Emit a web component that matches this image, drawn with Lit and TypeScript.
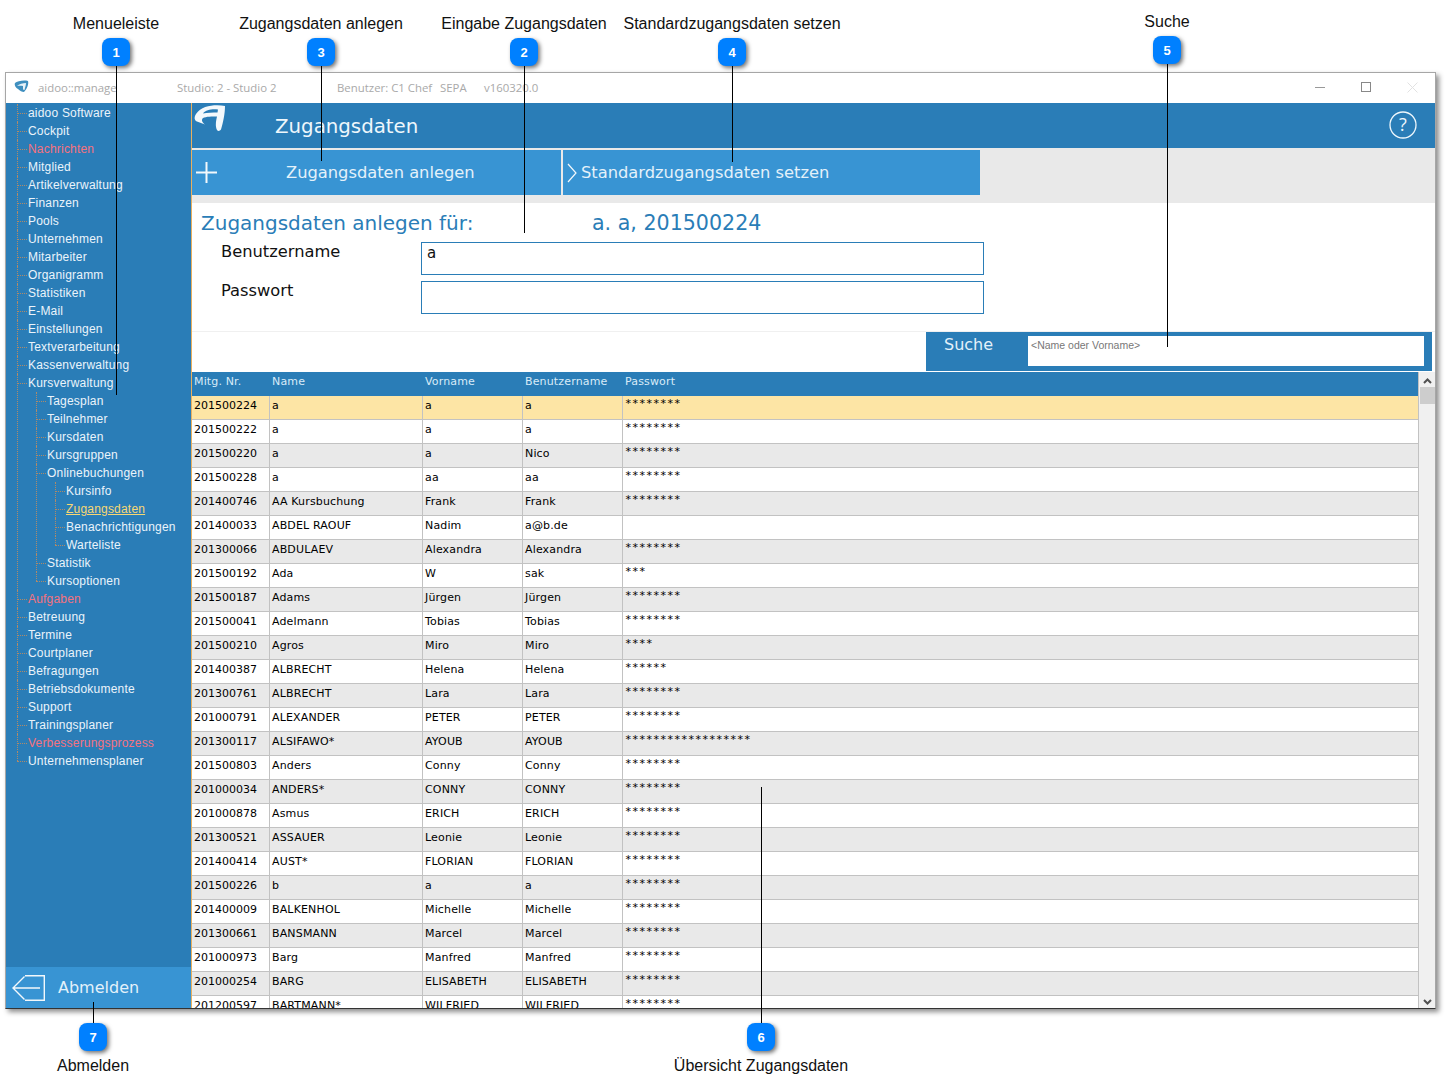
import {css, html, LitElement} from 'lit';
import {customElement} from 'lit/decorators.js';

type TreeItem = {label: string; tone?: 'red' | 'active'; children?: TreeItem[]};

const MENU: TreeItem[] = [
  {label: 'aidoo Software'},
  {label: 'Cockpit'},
  {label: 'Nachrichten', tone: 'red'},
  {label: 'Mitglied'},
  {label: 'Artikelverwaltung'},
  {label: 'Finanzen'},
  {label: 'Pools'},
  {label: 'Unternehmen'},
  {label: 'Mitarbeiter'},
  {label: 'Organigramm'},
  {label: 'Statistiken'},
  {label: 'E-Mail'},
  {label: 'Einstellungen'},
  {label: 'Textverarbeitung'},
  {label: 'Kassenverwaltung'},
  {
    label: 'Kursverwaltung',
    children: [
      {label: 'Tagesplan'},
      {label: 'Teilnehmer'},
      {label: 'Kursdaten'},
      {label: 'Kursgruppen'},
      {
        label: 'Onlinebuchungen',
        children: [
          {label: 'Kursinfo'},
          {label: 'Zugangsdaten', tone: 'active'},
          {label: 'Benachrichtigungen'},
          {label: 'Warteliste'}
        ]
      },
      {label: 'Statistik'},
      {label: 'Kursoptionen'}
    ]
  },
  {label: 'Aufgaben', tone: 'red'},
  {label: 'Betreuung'},
  {label: 'Termine'},
  {label: 'Courtplaner'},
  {label: 'Befragungen'},
  {label: 'Betriebsdokumente'},
  {label: 'Support'},
  {label: 'Trainingsplaner'},
  {label: 'Verbesserungsprozess', tone: 'red'},
  {label: 'Unternehmensplaner'}
];

const S8 = '********';
const ROWS: string[][] = [
  ['201500224', 'a', 'a', 'a', S8],
  ['201500222', 'a', 'a', 'a', S8],
  ['201500220', 'a', 'a', 'Nico', S8],
  ['201500228', 'a', 'aa', 'aa', S8],
  ['201400746', 'AA Kursbuchung', 'Frank', 'Frank', S8],
  ['201400033', 'ABDEL RAOUF', 'Nadim', 'a@b.de', ''],
  ['201300066', 'ABDULAEV', 'Alexandra', 'Alexandra', S8],
  ['201500192', 'Ada', 'W', 'sak', '***'],
  ['201500187', 'Adams', 'Jürgen', 'Jürgen', S8],
  ['201500041', 'Adelmann', 'Tobias', 'Tobias', S8],
  ['201500210', 'Agros', 'Miro', 'Miro', '****'],
  ['201400387', 'ALBRECHT', 'Helena', 'Helena', '******'],
  ['201300761', 'ALBRECHT', 'Lara', 'Lara', S8],
  ['201000791', 'ALEXANDER', 'PETER', 'PETER', S8],
  ['201300117', 'ALSIFAWO*', 'AYOUB', 'AYOUB', '******************'],
  ['201500803', 'Anders', 'Conny', 'Conny', S8],
  ['201000034', 'ANDERS*', 'CONNY', 'CONNY', S8],
  ['201000878', 'Asmus', 'ERICH', 'ERICH', S8],
  ['201300521', 'ASSAUER', 'Leonie', 'Leonie', S8],
  ['201400414', 'AUST*', 'FLORIAN', 'FLORIAN', S8],
  ['201500226', 'b', 'a', 'a', S8],
  ['201400009', 'BALKENHOL', 'Michelle', 'Michelle', S8],
  ['201300661', 'BANSMANN', 'Marcel', 'Marcel', S8],
  ['201000973', 'Barg', 'Manfred', 'Manfred', S8],
  ['201000254', 'BARG', 'ELISABETH', 'ELISABETH', S8],
  ['201200597', 'BARTMANN*', 'WILFRIED', 'WILFRIED', S8]
];

// x = centre of badge and line, badgeY = top of badge, lineTo = other end of the line
const CALLOUTS = [
  {n: 1, label: 'Menueleiste', x: 116, labelY: 15, badgeY: 38, lineFrom: 66, lineTo: 395},
  {n: 2, label: 'Eingabe Zugangsdaten', x: 524, labelY: 15, badgeY: 38, lineFrom: 66, lineTo: 233},
  {n: 3, label: 'Zugangsdaten anlegen', x: 321, labelY: 15, badgeY: 38, lineFrom: 66, lineTo: 161},
  {n: 4, label: 'Standardzugangsdaten setzen', x: 732, labelY: 15, badgeY: 38, lineFrom: 66, lineTo: 162},
  {n: 5, label: 'Suche', x: 1167, labelY: 13, badgeY: 36, lineFrom: 64, lineTo: 347},
  {n: 6, label: 'Übersicht Zugangsdaten', x: 761, labelY: 1057, badgeY: 1023, lineFrom: 787, lineTo: 1023},
  {n: 7, label: 'Abmelden', x: 93, labelY: 1057, badgeY: 1023, lineFrom: 1002, lineTo: 1023}
];

@customElement('app-root')
export class AppRoot extends LitElement {
  static styles = css`
    :host {
      display: block;
      position: relative;
      box-sizing: border-box;
      width: 1445px;
      height: 1091px;
      padding: 72px 9px 82px 5px;
      background: #fff;
      font-family: "DejaVu Sans", sans-serif;
      overflow: hidden;
    }

    .window {
      display: flex;
      flex-direction: column;
      box-sizing: border-box;
      height: 937px;
      background: #fff;
      border: 1px solid #a6a6a6;
      border-bottom: 1px solid #333;
      box-shadow: 3px 3px 5px rgba(0, 0, 0, 0.45);
    }

    .titlebar {
      display: flex;
      align-items: center;
      flex: none;
      box-sizing: border-box;
      height: 30px;
      padding-bottom: 1px;
      font: 11.4px "Open Sans", sans-serif;
      color: #a9a9a9;
      white-space: nowrap;
    }

    .titlebar svg {
      flex: none;
    }

    .app-icon {
      margin: 0 9px 2px 8px;
    }

    .t-app {
      width: 139px;
    }

    .t-studio {
      width: 160px;
    }

    .t-user {
      width: 103px;
    }

    .t-sepa {
      width: 44px;
    }

    .t-version {
      flex: 1;
    }

    .win-btn {
      display: flex;
      justify-content: center;
      width: 45px;
      margin-right: 1px;
    }

    .win-btn:first-of-type {
      margin-right: 0;
    }

    .win-btn:last-child {
      margin-right: 0;
    }

    .body {
      display: flex;
      flex: 1;
      min-height: 0;
    }

    .sidebar {
      display: flex;
      flex-direction: column;
      flex: none;
      width: 186px;
      box-sizing: border-box;
      background: #2a7db7;
      border-right: 1px solid #e8b060;
    }

    .tree-wrap {
      flex: 1;
      padding: 1px 0 0 0;
    }

    ul {
      list-style: none;
      margin: 0;
      padding: 0 0 0 19px;
    }

    .tree-wrap > ul {
      padding-left: 22px;
    }

    li {
      position: relative;
      font: 12px/18px "Liberation Sans", sans-serif;
      letter-spacing: 0.2px;
      color: #eaf4fb;
      white-space: nowrap;
    }

    li::before {
      content: "";
      position: absolute;
      left: -11px;
      top: 9px;
      width: 10px;
      border-top: 1px dotted #b08a68;
    }

    li::after {
      content: "";
      position: absolute;
      left: -11px;
      top: 0;
      bottom: 0;
      border-left: 1px dotted #b08a68;
    }

    li:last-child::after {
      bottom: auto;
      height: 9px;
    }

    .red {
      color: #f4727f;
    }

    .active {
      color: #f7d774;
      text-decoration: underline;
    }

    .logout {
      display: flex;
      align-items: center;
      flex: none;
      height: 41px;
      background: #3894d3;
      color: #e3f1fa;
      font-size: 16px;
    }

    .logout svg {
      margin: 0 13px 0 6px;
    }

    .main {
      display: flex;
      flex-direction: column;
      flex: 1;
      min-width: 0;
    }

    .header {
      display: flex;
      align-items: center;
      flex: none;
      height: 45px;
      background: #2a7db7;
      color: #eef7fc;
      font-size: 19.800px;
    }

    .logo {
      align-self: flex-start;
      margin: 2px 49px 0 2px;
    }

    .header span {
      flex: 1;
      padding-top: 1px;
    }

    .help {
      margin: 0 18px 2px 0;
    }

    .toolbar {
      display: flex;
      flex: none;
      gap: 2px;
      height: 55px;
      box-sizing: border-box;
      padding-top: 2px;
      background: #e9e9e9;
    }

    .tool {
      display: flex;
      align-items: center;
      height: 45px;
      background: #3894d3;
      color: #e3f1fa;
      font-size: 16.300px;
      white-space: nowrap;
    }

    .tool-add {
      width: 369px;
    }

    .tool-add svg {
      margin: 0 69px 0 4px;
    }

    .tool-default {
      width: 417px;
    }

    .tool-default svg {
      margin: 0 4px 0 4px;
    }

    .form {
      flex: none;
      box-sizing: border-box;
      height: 129px;
      padding: 8px 0 0 9px;
      border-bottom: 1px solid #f0f0f0;
    }

    .form-title {
      display: flex;
      height: 24px;
      color: #2a7db7;
      font-size: 20px;
      line-height: 25px;
      white-space: nowrap;
    }

    .form-title span:first-child {
      width: 391px;
    }

    .form-title span:last-child {
      font-size: 20.600px;
    }

    .fields {
      display: grid;
      grid-template-columns: 200px 563px;
      grid-auto-rows: 33px;
      row-gap: 6px;
      margin: 7px 0 0 20px;
      font-size: 16.300px;
      color: #111;
    }

    .field-label {
      padding-top: 1px;
      line-height: 18px;
    }

    .field {
      box-sizing: border-box;
      border: 1px solid #2a7db7;
      padding: 1px 0 0 5px;
      font-size: 15px;
      line-height: 18px;
    }

    .search-row {
      display: flex;
      justify-content: flex-end;
      flex: none;
      padding-right: 3px;
      margin-bottom: 1px;
    }

    .search {
      display: flex;
      box-sizing: border-box;
      width: 506px;
      height: 39px;
      padding: 4px 8px 5px 18px;
      background: #2a7db7;
      color: #e3f1fa;
      font-size: 16px;
    }

    .search-label {
      width: 84px;
      line-height: 18px;
    }

    .search-input {
      flex: 1;
      padding: 3px;
      background: #fff;
      color: #777;
      font: 10.500px/12px "Liberation Sans", sans-serif;
    }

    .grid-wrap {
      display: flex;
      flex: 1;
      min-height: 0;
    }

    .grid {
      flex: 1;
      min-width: 0;
      overflow: hidden;
    }

    table {
      width: 1226px;
      table-layout: fixed;
      border-collapse: separate;
      border-spacing: 0;
      font-size: 11px;
      color: #000;
    }

    th {
      height: 24px;
      box-sizing: border-box;
      padding: 3px 0 0 2px;
      background: #2a7db7;
      color: #d8ebf7;
      font-weight: 400;
      text-align: left;
      vertical-align: top;
      letter-spacing: 0.15px;
    }

    td {
      height: 24px;
      box-sizing: border-box;
      padding: 3px 0 0 2px;
      border-right: 1px solid #c2c2c2;
      border-bottom: 1px solid #c2c2c2;
      vertical-align: top;
      line-height: 14px;
      letter-spacing: 0.15px;
      white-space: nowrap;
      overflow: hidden;
    }

    td:first-child {
      letter-spacing: 0;
    }

    td:last-child {
      border-right: 0;
    }

    td.pw {
      letter-spacing: 1.500px;
      line-height: 10px;
      padding-left: 2.500px;
    }

    tr.even td {
      background: #e9e9e9;
    }

    tr.sel td {
      background: #fde5a5;
    }

    .scrollbar {
      display: flex;
      flex-direction: column;
      align-items: center;
      flex: none;
      box-sizing: border-box;
      width: 17px;
      background: #f0f0f0;
      border-left: 1px solid #c2c2c2;
    }

    .scrollbar svg {
      flex: none;
      margin: 6px 0 3px;
    }

    .thumb {
      flex: none;
      align-self: stretch;
      height: 17px;
      margin-left: 1px;
      background: #cdcdcd;
    }

    .spacer {
      flex: 1;
    }

    .callout-label {
      position: absolute;
      transform: translateX(-50%);
      font: 16px/18px "Liberation Sans", sans-serif;
      color: #111;
      white-space: nowrap;
    }

    .badge {
      position: absolute;
      display: flex;
      align-items: center;
      justify-content: center;
      width: 28px;
      height: 28px;
      margin-left: -14px;
      border-radius: 8px;
      background: #0080ff;
      color: #fff;
      font: bold 13px "Liberation Sans", sans-serif;
      box-shadow: 2px 2px 4px rgba(0, 0, 0, 0.55);
    }

    .leader {
      position: absolute;
      width: 1.500px;
      background: #000;
    }
  `;

  renderTree(items: TreeItem[]): unknown {
    return html`<ul>
      ${items.map(
        (item) => html`<li>
          <span class=${item.tone ?? ''}>${item.label}</span>
          ${item.children ? this.renderTree(item.children) : ''}
        </li>`
      )}
    </ul>`;
  }

  renderCallouts() {
    return CALLOUTS.map(
      (c) => html`
        <div class="leader" style="left:${c.x - 0.5}px;top:${c.lineFrom}px;height:${c.lineTo - c.lineFrom}px"></div>
        <div class="badge" style="left:${c.x}px;top:${c.badgeY}px">${c.n}</div>
        <div class="callout-label" style="left:${c.x}px;top:${c.labelY}px">${c.label}</div>
      `
    );
  }

  render() {
    return html`
      <div class="window">
        <div class="titlebar">
          <svg class="app-icon" width="15" height="13" viewBox="0 0 15 13">
            <path d="M1 3C3 1 10 0 14 1c1 3-1 8-4 11-2 0-4-1-6-3-2-1-4-4-3-6z" fill="#3f8fbf" />
            <path d="M3 6C5 4 9 3 12 3c0 2-1 5-1.500 7l-1.500-.5V6C7 5.500 5 5.500 3 6z" fill="#e8f3f9" />
          </svg>
          <span class="t-app">aidoo::manage</span>
          <span class="t-studio">Studio: 2 - Studio 2</span>
          <span class="t-user">Benutzer: C1 Chef</span>
          <span class="t-sepa">SEPA</span>
          <span class="t-version">v160320.0</span>
          <span class="win-btn"><svg width="11" height="11"><path d="M0 5.500h10" stroke="#999" /></svg></span>
          <span class="win-btn"><svg width="11" height="11"><rect x=".5" y=".5" width="9" height="9" fill="none" stroke="#888" /></svg></span>
          <span class="win-btn"><svg width="11" height="11"><path d="M.5 .5l10 10M10.500 .5l-10 10" stroke="#e2e2e2" /></svg></span>
        </div>
        <div class="body">
          <nav class="sidebar">
            <div class="tree-wrap">${this.renderTree(MENU)}</div>
            <div class="logout">
              <svg width="33" height="26" viewBox="0 0 33 26" fill="none" stroke="#f2f8fc" stroke-width="1.400">
                <path d="M13 .7H32.300V25.300H13" />
                <path d="M1 13H28M12.500 1.500L1 13l11.500 11.500" />
              </svg>
              Abmelden
            </div>
          </nav>
          <main class="main">
            <div class="header">
              <svg class="logo" width="32" height="27" viewBox="0 0 32 27">
                <path
                  fill="#f4f9fc"
                  fill-rule="evenodd"
                  d="M31 1C22 -.5 8 0 2 9C0 12 0 15 3 16.500L11 19.500C8 17 7 15 9 13C12 11.500 18 11.500 23 11.500C22 16 21 21 23 25C24 26.500 26 26 27 24.500C29 18 31 9 31 1ZM24 4.500C18 4 12 4.500 9 8.500C13 7.500 19 7.500 23.500 7.500Z"
                />
              </svg>
              <span>Zugangsdaten</span>
              <svg class="help" width="28" height="28" viewBox="0 0 28 28">
                <circle cx="14" cy="14" r="13" fill="none" stroke="#eef7fc" stroke-width="1.300" />
                <text x="14" y="20" text-anchor="middle" fill="#eef7fc" font-family="Open Sans, sans-serif" font-size="18">?</text>
              </svg>
            </div>
            <div class="toolbar">
              <div class="tool tool-add">
                <svg width="21" height="21"><path d="M10.500 0v21M0 10.500h21" stroke="#f2f8fc" stroke-width="2" /></svg>
                Zugangsdaten anlegen
              </div>
              <div class="tool tool-default">
                <svg width="10" height="20" fill="none"><path d="M1 1l8 9-8 9" stroke="#f2f8fc" stroke-width="1.200" /></svg>
                Standardzugangsdaten setzen
              </div>
            </div>
            <div class="form">
              <div class="form-title"><span>Zugangsdaten anlegen für:</span><span>a. a, 201500224</span></div>
              <div class="fields">
                <div class="field-label">Benutzername</div>
                <div class="field">a</div>
                <div class="field-label">Passwort</div>
                <div class="field"></div>
              </div>
            </div>
            <div class="search-row">
              <div class="search">
                <div class="search-label">Suche</div>
                <div class="search-input">&lt;Name oder Vorname&gt;</div>
              </div>
            </div>
            <div class="grid-wrap">
              <div class="grid">
                <table>
                  <colgroup>
                    <col style="width:78px" /><col style="width:153px" /><col style="width:100px" /><col style="width:100px" /><col />
                  </colgroup>
                  <thead>
                    <tr><th>Mitg. Nr.</th><th>Name</th><th>Vorname</th><th>Benutzername</th><th>Passwort</th></tr>
                  </thead>
                  <tbody>
                    ${ROWS.map(
                      (r, i) => html`<tr class=${i === 0 ? 'sel' : i % 2 === 0 ? 'even' : ''}>
                        <td>${r[0]}</td><td>${r[1]}</td><td>${r[2]}</td><td>${r[3]}</td><td class="pw">${r[4]}</td>
                      </tr>`
                    )}
                  </tbody>
                </table>
              </div>
              <div class="scrollbar">
                <svg width="9" height="6"><path d="M1 5l3.500-3.500L8 5" fill="none" stroke="#505050" stroke-width="2" /></svg>
                <div class="thumb"></div>
                <div class="spacer"></div>
                <svg width="9" height="6"><path d="M1 1l3.500 3.500L8 1" fill="none" stroke="#505050" stroke-width="2" /></svg>
              </div>
            </div>
          </main>
        </div>
      </div>
      ${this.renderCallouts()}
    `;
  }
}
